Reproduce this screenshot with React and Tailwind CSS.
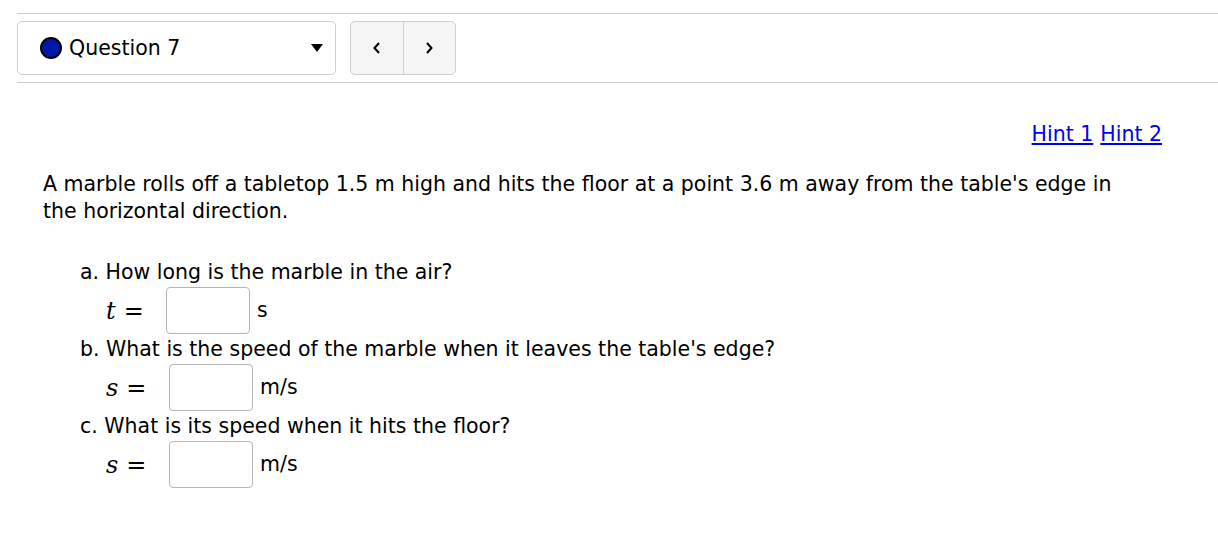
export default function App() {
  const parts = [
    { label: 'a. How long is the marble in the air?', v: 't', unit: 's' },
    { label: "b. What is the speed of the marble when it leaves the table's edge?", v: 's', unit: 'm/s' },
    { label: 'c. What is its speed when it hits the floor?', v: 's', unit: 'm/s' },
  ]

  return (
    <div className="w-[1218px] h-[534px] bg-white text-black font-['DejaVu_Sans',sans-serif] pl-[17px] pt-[13px]">
      <div className="border-t border-[#cfcfcf]" />
      <div className="flex items-center gap-[14px] pt-[7px] pb-[7px]">
        <div className="w-[319px] h-[54px] border border-[#cfcfcf] rounded-[5px] flex items-center pl-[22px] pr-[10px]">
          <span className="w-[22px] h-[22px] rounded-full bg-[#0018a8] border-2 border-black" />
          <span className="ml-[7px] text-[20.5px]">Question 7</span>
          <svg className="ml-auto mr-[1px]" width="14" height="10" viewBox="0 0 14 10">
            <path d="M1 1 L13 1 L7 9 Z" fill="black" />
          </svg>
        </div>
        <div className="h-[54px] w-[106px] flex border border-[#cfcfcf] rounded-[5px] bg-[#f5f5f5]">
          <button className="flex-1 flex items-center justify-center border-r border-[#cfcfcf]">
            <svg width="10" height="14" viewBox="0 0 10 14">
              <path d="M7 2 L2.5 7 L7 12" stroke="black" strokeWidth="2" fill="none" />
            </svg>
          </button>
          <button className="flex-1 flex items-center justify-center">
            <svg width="10" height="14" viewBox="0 0 10 14">
              <path d="M3 2 L7.5 7 L3 12" stroke="black" strokeWidth="2" fill="none" />
            </svg>
          </button>
        </div>
      </div>
      <div className="border-t border-[#cfcfcf]" />

      <div className="flex justify-end pr-[56px] pt-[36px] text-[20.5px] gap-[7px]">
        <a href="#" className="text-[#0000ee] underline">Hint 1</a>
        <a href="#" className="text-[#0000ee] underline">Hint 2</a>
      </div>

      <p className="pl-[26px] pr-[83px] pt-[21px] text-[20.5px] leading-[27px]">
        A marble rolls off a tabletop 1.5 m high and hits the floor at a point 3.6 m away from the table's edge in the horizontal direction.
      </p>

      <div className="pl-[63px] pt-[34px] text-[20.5px]">
        {parts.map((p, i) => (
          <div key={i}>
            <div className="leading-[27px]">{p.label}</div>
            <div className="flex items-center h-[50px] pl-[26px]">
              <div className={`flex items-center ${i === 0 ? 'w-[60px]' : 'w-[63px]'}`}>
                <i className="font-['DejaVu_Serif',serif] text-[24px] leading-none">{p.v}</i>
                <span className="font-['DejaVu_Serif',serif] text-[24px] leading-none ml-[8px]">=</span>
              </div>
              <input className="w-[84px] h-[47px] border border-[#b5b5b5] rounded-[4px]" />
              <span className="ml-[7px]">{p.unit}</span>
            </div>
          </div>
        ))}
      </div>
    </div>
  )
}
